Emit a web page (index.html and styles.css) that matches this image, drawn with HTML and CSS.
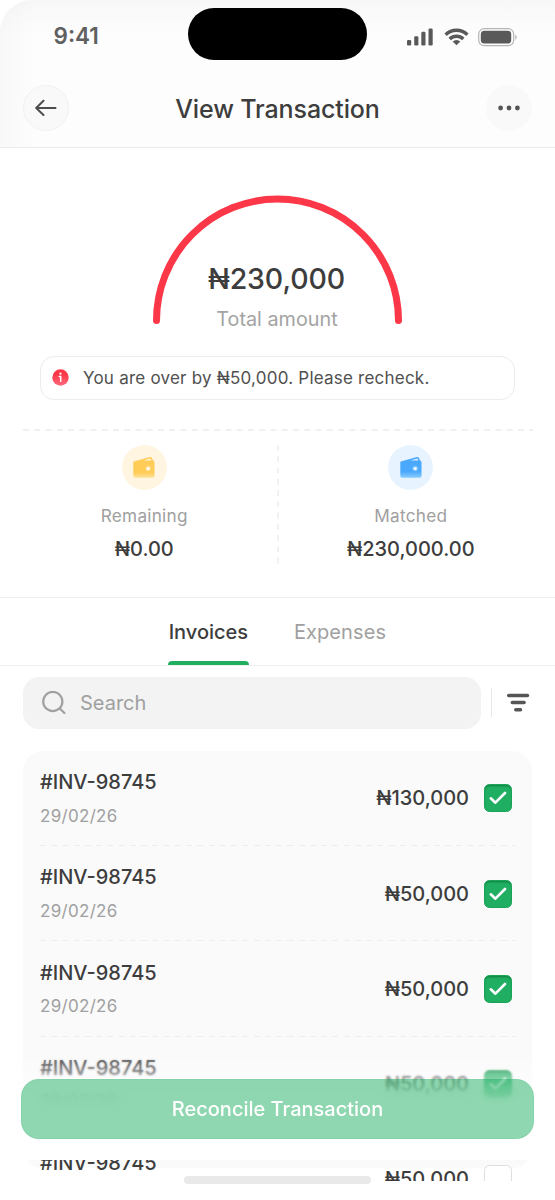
FILE: index.html
```html
<!DOCTYPE html>
<html lang="en">
<head>
<meta charset="utf-8">
<title>View Transaction</title>
<link rel="stylesheet" href="styles.css">
</head>
<body>
<svg class="defs" width="0" height="0">
  <defs>
    <linearGradient id="amber" x1="0" y1="0" x2="0" y2="1"><stop offset=".75" stop-color="#ffcd57"/><stop offset="1" stop-color="#ffe19a"/></linearGradient>
    <linearGradient id="blue" x1="0" y1="0" x2="0" y2="1"><stop offset=".7" stop-color="#4aa9fc"/><stop offset="1" stop-color="#8accff"/></linearGradient>
    <linearGradient id="alert" x1="0" y1="0" x2="0" y2="1"><stop offset=".3" stop-color="#fb3748"/><stop offset="1" stop-color="#ff6b7d"/></linearGradient>
    <symbol id="wallet" viewBox="0 0 24 24">
      <path d="M1.800 5.400 17.800 1c1.300-.4 2.200.4 2.500 1.700l.5 1.500c1.200.4 1.700 1.200 1.700 2.400v13.200c0 1.200-.7 1.900-1.900 1.900H3.200c-1.200 0-1.900-.7-1.900-1.900V6.400c0-.5.1-.8.5-1z"/>
      <path d="M11.500 4.400 17.800 2.600c.7-.2 1 .1 1.200.8l.3 1z" fill="#fff" opacity=".75"/>
      <circle cx="16.200" cy="12.600" r="3" fill="#fff" opacity=".22"/>
      <circle cx="16.200" cy="12.600" r="1.700" fill="#fff" opacity=".95"/>
    </symbol>
  </defs>
</svg>
<div class="screen">
  <header class="top">
    <div class="status">
      <span class="time">9:41</span>
      <div class="island"></div>
      <div class="signals">
        <svg width="27" height="18" viewBox="0 0 27 18" fill="#595959"><rect x="0" y="12" width="4.200" height="5.500" rx="1.300"/><rect x="7.200" y="8.200" width="4.200" height="9.300" rx="1.300"/><rect x="14.300" y="3.800" width="4.200" height="13.700" rx="1.300"/><rect x="21.500" y=".5" width="4.200" height="17" rx="1.300"/></svg>
        <svg class="wifi" width="25" height="18" viewBox="0 0 25 18" fill="none" stroke="#595959" stroke-width="3.400"><path d="M1.600 6.800a15.500 15.500 0 0 1 21.800 0M5.700 11a9.600 9.600 0 0 1 13.600 0"/><path d="M12.500 17.300 8.700 13.500a5.400 5.400 0 0 1 7.600 0z" fill="#595959" stroke="none"/></svg>
        <svg class="battery" width="40" height="19" viewBox="0 0 40 19"><rect x=".7" y=".7" width="35" height="17" rx="5.500" fill="none" stroke="#b5b5b5" stroke-width="1.200"/><rect x="2.800" y="2.800" width="30.400" height="12.800" rx="3.600" fill="#595959"/><path d="M37.300 6.800c1.900.8 1.900 4 0 4.900z" fill="#b5b5b5"/></svg>
      </div>
    </div>
    <div class="nav">
      <button class="round back"><svg width="22" height="18" viewBox="0 0 22 18" fill="none" stroke="#4d4d4d" stroke-width="2" stroke-linecap="round" stroke-linejoin="round"><path d="M20.500 9H1.500M8.500 1.800 1.200 9l7.300 7"/></svg></button>
      <h1>View Transaction</h1>
      <button class="round more"><svg width="24" height="6" viewBox="0 0 24 6" fill="#555"><circle cx="3.600" cy="3" r="2.400"/><circle cx="12" cy="3" r="2.400"/><circle cx="20.400" cy="3" r="2.400"/></svg></button>
    </div>
  </header>
  <section class="summary">
    <div class="gauge">
      <svg class="arc" width="250" height="132" viewBox="0 0 250 132" fill="none" stroke="#fb3748" stroke-width="7" stroke-linecap="round"><path d="M3.500 125.500A121 121.500 0 0 1 245.500 125.500"/></svg>
      <div class="total">₦230,000</div>
      <div class="total-label">Total amount</div>
    </div>
    <div class="notice">
      <svg width="17" height="17" viewBox="0 0 17 17"><circle cx="8.500" cy="8.500" r="8.200" fill="url(#alert)"/><circle cx="8.500" cy="4.700" r="1.100" fill="#fff"/><path d="M7.200 7.600h1.500v4.600" stroke="#fff" stroke-width="1.500" fill="none" stroke-linecap="round"/></svg>
      <span>You are over by ₦50,000. Please recheck.</span>
    </div>
    <svg class="dash-h" width="510" height="2"><path d="M0 1h510" stroke="#ececec" stroke-width="1.400" stroke-dasharray="6 5.250"/></svg>
    <div class="stats">
      <div class="stat">
        <div class="badge amber"><svg width="24" height="24" fill="url(#amber)"><use href="#wallet"/></svg></div>
        <div class="stat-label">Remaining</div>
        <div class="stat-value">₦0.00</div>
      </div>
      <svg class="dash-v" width="2" height="121"><path d="M1 0v121" stroke="#ebebeb" stroke-width="1.400" stroke-dasharray="6 5.250"/></svg>
      <div class="stat">
        <div class="badge blue"><svg width="24" height="24" fill="url(#blue)"><use href="#wallet"/></svg></div>
        <div class="stat-label">Matched</div>
        <div class="stat-value">₦230,000.00</div>
      </div>
    </div>
  </section>
  <nav class="tabs">
    <div class="tab active"><span>Invoices</span></div>
    <div class="tab"><span>Expenses</span></div>
  </nav>
  <div class="tools">
    <div class="search">
      <svg width="24" height="24" viewBox="0 0 24 24" fill="none" stroke="#a0a0a0" stroke-width="2.200" stroke-linecap="round"><circle cx="10.800" cy="10.500" r="9.600"/><path d="m18 17.800 4.400 4.200"/></svg>
      <span>Search</span>
    </div>
    <div class="rule"></div>
    <svg class="filter" width="24" height="20" viewBox="0 0 24 20" stroke="#555" stroke-width="3.500" stroke-linecap="round"><path d="M2.700 2.500h18.800M6.300 9.600h11.800M9.800 16.700h4.700"/></svg>
  </div>
  <div class="viewport">
    <div class="list">
      <div class="row"><div><div class="name">#INV-98745</div><div class="date">29/02/26</div></div><div class="pick"><span>₦130,000</span><i class="box on"><svg width="18" height="14" viewBox="0 0 18 14"><path d="m1.800 7.300 4.600 4.400L16 2"/></svg></i></div></div>
      <div class="row"><div><div class="name">#INV-98745</div><div class="date">29/02/26</div></div><div class="pick"><span>₦50,000</span><i class="box on"><svg width="18" height="14" viewBox="0 0 18 14"><path d="m1.800 7.300 4.600 4.400L16 2"/></svg></i></div></div>
      <div class="row"><div><div class="name">#INV-98745</div><div class="date">29/02/26</div></div><div class="pick"><span>₦50,000</span><i class="box on"><svg width="18" height="14" viewBox="0 0 18 14"><path d="m1.800 7.300 4.600 4.400L16 2"/></svg></i></div></div>
      <div class="row"><div><div class="name">#INV-98745</div><div class="date">29/02/26</div></div><div class="pick"><span>₦50,000</span><i class="box on"><svg width="18" height="14" viewBox="0 0 18 14"><path d="m1.800 7.300 4.600 4.400L16 2"/></svg></i></div></div>
      <div class="row"><div class="name">#INV-98745</div><div class="pick"><span>₦50,000</span><i class="box"></i></div></div>
    </div>
  </div>
  <div class="action">
    <div class="veil soft"></div>
    <div class="veil strong"></div>
    <div class="veil fade"></div>
    <button class="cta">Reconcile Transaction</button>
  </div>
  <div class="home"></div>
</div>
</body>
</html>
```

FILE: styles.css
```css
* { box-sizing: border-box; }
body { margin: 0; background: #fff; font-family: Inter, "Liberation Sans", sans-serif; color: #3d3d3d; }
button { border: 0; padding: 0; font: inherit; }
svg { display: block; flex: none; }
.defs { position: absolute; }
.screen { position: relative; width: 555px; height: 1200px; overflow: hidden; background: #fff; }

.top {
  height: 148px;
  border-bottom: 1px solid #ececec;
  border-radius: 32px 0 0 0;
  background:
    linear-gradient(90deg, rgba(0,0,0,.02), transparent 36px),
    linear-gradient(180deg, rgba(0,0,0,.022), transparent 34px),
    #fdfdfd;
}
.status { display: grid; grid-template-columns: 188px 179px 1fr; height: 68px; padding-top: 8px; }
.time { padding: 14px 0 0 53.500px; font-size: 22.500px; line-height: 28px; font-weight: 600; color: #606060; }
.island { height: 51.500px; border-radius: 26px; background: #000; }
.signals { display: flex; align-items: flex-start; padding: 19.500px 0 0 40px; }
.wifi { margin-left: 10px; }
.battery { margin-left: 9px; }
.nav { display: flex; align-items: center; justify-content: space-between; padding: 17px 22.500px 0; }
.round { width: 46px; height: 46px; border-radius: 50%; background: #f9f9f9; display: grid; place-items: center; }
.back { border: 1px solid #f1f1f1; }
h1 { margin: 2px 0 0; font-size: 25px; line-height: 32px; font-weight: 500; letter-spacing: -.12px; }

.summary { height: 448.500px; padding-top: 47px; display: flex; flex-direction: column; align-items: center; }
.gauge { display: grid; width: 250px; height: 160.500px; justify-items: center; align-content: start; }
.arc { grid-area: 1 / 1; }
.total { grid-area: 1 / 1; margin: 66px 2px 0 0; font-size: 28.500px; line-height: 36px; font-weight: 500; letter-spacing: -.1px; }
.total-label { margin: -20px 1px 0 0; font-size: 19.800px; line-height: 24px; color: #a3a3a3; }
.notice { width: 475px; height: 44px; border: 1.500px solid #ececec; border-radius: 14px; display: flex; align-items: center; gap: 14px; padding-left: 11px; font-size: 17px; letter-spacing: .22px; color: #505050; }
.dash-h { margin-top: 29.500px; }
.stats { width: 555px; display: flex; padding-top: 14px; }
.stat { flex: 1; display: flex; flex-direction: column; align-items: center; }
.stat:first-child { padding-left: 12px; }
.stat:last-child { padding-right: 12px; }
.badge { width: 45px; height: 45px; border-radius: 50%; display: grid; place-items: center; }
.badge.amber { background: #fff5e0; }
.badge.blue { background: #e7f4ff; }
.stat-label { margin-top: 15px; font-size: 17.200px; line-height: 22px; letter-spacing: .25px; color: #a0a0a0; }
.stat-value { margin-top: 10px; font-size: 20px; line-height: 24px; font-weight: 500; }

.tabs { height: 69px; border-top: 1px solid #efefef; border-bottom: 1px solid #efefef; display: flex; justify-content: center; gap: 45px; padding-right: 1px; font-size: 20px; }
.tab { display: flex; flex-direction: column; align-items: center; line-height: 24px; padding-top: 22px; color: #a0a0a0; }
.tab + .tab { letter-spacing: .1px; }
.tab.active { color: #3d3d3d; font-weight: 500; }
.active::after { content: ""; width: 81px; height: 4px; margin-top: 17px; border-radius: 4px 4px 0 0; background: #1faf5f; }

.tools { display: flex; align-items: center; padding: 11px 25px 0 23px; }
.search { width: 458px; height: 52px; border-radius: 16px; background: #f3f3f3; display: flex; align-items: center; gap: 14px; padding-left: 19px; font-size: 20px; color: #a0a0a0; }
.rule { width: 1px; height: 29px; background: #e8e8e8; margin-left: 10px; }
.filter { margin-left: 14px; }

.viewport { height: 452px; padding: 22.500px 23px 0; overflow: hidden; }
.list { height: 417px; border-radius: 20px; background: #fafafa; }
.row { height: 95.250px; padding: 17px 20px 0 17px; display: flex; justify-content: space-between; background: repeating-linear-gradient(90deg, #ededed 0 6px, transparent 6px 11.250px) 17px 94px / 475px 1px no-repeat; }
.row:nth-child(n+4) { background: none; }
.name { font-size: 20px; line-height: 28px; font-weight: 500; }
.date { margin-top: 8.500px; font-size: 17px; line-height: 22px; letter-spacing: .3px; color: #a0a0a0; }
.pick { height: 60.500px; display: flex; align-items: center; gap: 15px; font-size: 20px; font-weight: 500; }
.box { width: 28px; height: 28px; border: 1.500px solid #dedede; border-radius: 5.500px; background: #fff; display: grid; place-items: center; }
.box.on { border: 1px solid #18a355; background: #20ae63; box-shadow: inset 0 1.500px 1px #148c49; }
.box path { fill: none; stroke: #fff; stroke-width: 2.600; stroke-linecap: round; stroke-linejoin: round; }

.action { position: absolute; left: 0; top: 1050px; width: 555px; height: 110px; padding: 29px 21px 0; }
.veil { position: absolute; inset: 0; }
.soft { backdrop-filter: blur(1px); mask-image: linear-gradient(transparent, #000 28px); }
.strong { backdrop-filter: blur(5px); mask-image: linear-gradient(transparent 32px, #000 56px); }
.fade { background: linear-gradient(rgba(255,255,255,0), rgba(255,255,255,.45) 30px, #fff 62px); }
.cta { position: relative; display: block; width: 513px; height: 60px; border-radius: 18px; background: rgba(31,175,98,.5); border: 1px solid rgba(25,160,85,.08); color: #fff; font-size: 20px; font-weight: 500; }
.home { position: absolute; left: 184px; top: 1176px; width: 187px; height: 8px; border-radius: 4px; background: #e9e9e9; }
```
